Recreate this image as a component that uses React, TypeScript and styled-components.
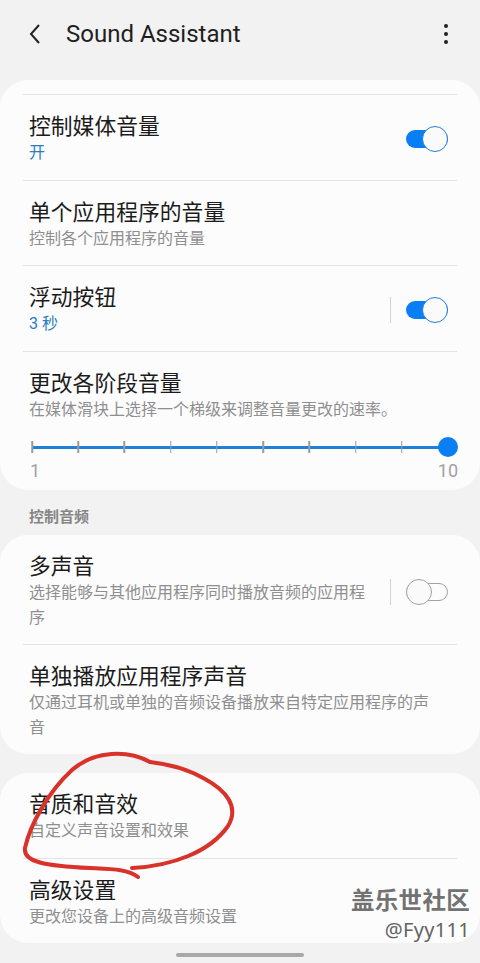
import styled, { createGlobalStyle } from "styled-components";

const GlobalStyle = createGlobalStyle`
  html, body {
    margin: 0;
    padding: 0;
    background: #f2f2f2;
  }
  body {
    font-family: Roboto, "Noto Sans CJK SC", sans-serif;
    -webkit-font-smoothing: antialiased;
  }
`;

const CJK = `Roboto, "Noto Sans CJK SC", sans-serif`;

const Page = styled.div`
  position: relative;
  width: 480px;
  height: 963px;
  overflow: hidden;
  background: #f2f2f2;
`;

const Header = styled.header`
  height: 80px;
  display: flex;
  align-items: flex-start;
  padding: 18px 24px 0 24px;
  box-sizing: border-box;
`;

const BackButton = styled.div`
  width: 30px;
  height: 32px;
  display: flex;
  align-items: center;
  justify-content: flex-start;
  padding-left: 4px;
`;

const Title = styled.h1`
  flex: 1;
  margin: 0 0 0 8px;
  font-family: Roboto, sans-serif;
  font-weight: 400;
  font-size: 24px;
  line-height: 32px;
  color: #1f1f1f;
`;

const MoreButton = styled.div`
  width: 20px;
  height: 32px;
  display: flex;
  flex-direction: column;
  align-items: center;
  justify-content: center;
  gap: 4px;
  span {
    width: 4px;
    height: 4px;
    border-radius: 50%;
    background: #222;
  }
`;

const Card = styled.section<{ $padTop?: number }>`
  background: #fcfcfc;
  border-radius: 28px;
  padding-top: ${(p) => p.$padTop ?? 0}px;
`;

const Divider = styled.div`
  height: 1px;
  background: #e4e4e4;
  margin: 0 23px;
`;

const Row = styled.div`
  display: flex;
  align-items: center;
  padding: 18px 32px 14px 29px;
`;

const RowText = styled.div`
  flex: 1;
  min-width: 0;
  padding-right: 12px;
`;

const RowTitle = styled.div`
  font-family: ${CJK};
  font-size: 21.8px;
  line-height: 28px;
  color: #1b1b1b;
`;

const RowSub = styled.div<{ $accent?: boolean }>`
  font-family: ${CJK};
  font-size: 16px;
  line-height: 24.5px;
  color: ${(p) => (p.$accent ? "#2b7bc0" : "#8f8f8f")};
`;

const VSep = styled.div`
  width: 1px;
  height: 26px;
  background: #d2d2d2;
  margin: 0 15px 0 4px;
`;

const Track = styled.div<{ $on: boolean }>`
  position: relative;
  width: 42px;
  height: 26px;
  flex-shrink: 0;
  &::before {
    content: "";
    position: absolute;
    left: 0;
    right: 0;
    top: 4px;
    height: 18px;
    border-radius: 9px;
    box-sizing: border-box;
    background: ${(p) => (p.$on ? "#0a7ff5" : "transparent")};
    border: ${(p) => (p.$on ? "none" : "1.5px solid #a3a3a3")};
  }
`;

const Thumb = styled.div<{ $on: boolean }>`
  position: absolute;
  top: 0;
  ${(p) => (p.$on ? "right: 0;" : "left: 0;")}
  width: 26px;
  height: 26px;
  border-radius: 50%;
  box-sizing: border-box;
  background: #fafafa;
  border: 1.5px solid ${(p) => (p.$on ? "#1f7fd8" : "#a3a3a3")};
`;

const Toggle = ({ on }: { on: boolean }) => (
  <Track $on={on}>
    <Thumb $on={on} />
  </Track>
);

const SliderRow = styled.div`
  padding: 18px 32px 9px 29px;
`;

const SliderBox = styled.div`
  position: relative;
  height: 20px;
  margin: 15px 0 0 3px;
`;

const SliderLine = styled.div`
  position: absolute;
  left: 0;
  right: 0;
  top: 8.5px;
  height: 3px;
  background: #1f80d8;
`;

const Tick = styled.div`
  position: absolute;
  top: 4px;
  width: 1.5px;
  height: 12px;
  background: #9a9a9a;
  transform: translateX(-0.75px);
`;

const SliderThumb = styled.div`
  position: absolute;
  right: -10px;
  top: 0;
  width: 20px;
  height: 20px;
  border-radius: 50%;
  background: #0a7ff5;
`;

const SliderLabels = styled.div`
  display: flex;
  justify-content: space-between;
  margin: 4px -10px 0 1px;
  font-family: Roboto, sans-serif;
  font-size: 18px;
  line-height: 20px;
  color: #a2a2a2;
`;

const SectionHeader = styled.div`
  font-family: ${CJK};
  font-weight: 700;
  font-size: 15px;
  line-height: 24px;
  color: #858585;
  padding: 15px 29px 6px 29px;
`;

const Gap = styled.div`
  height: 19px;
`;

const HomeBar = styled.div`
  position: absolute;
  left: 176px;
  bottom: 6px;
  width: 128px;
  height: 4px;
  border-radius: 2px;
  background: #a9a9a9;
`;

const Watermark = styled.div`
  position: absolute;
  right: 10px;
  bottom: 22px;
  display: flex;
  flex-direction: column;
  align-items: flex-end;
  gap: 7px;
  font-family: "Noto Sans CJK SC", sans-serif;
  pointer-events: none;
`;

const WatermarkName = styled.div`
  font-size: 23.5px;
  line-height: 26px;
  font-weight: 700;
  color: #727272;
  letter-spacing: 0.3px;
  text-shadow: 1px 1px 0 #ffffff;
`;

const WatermarkUser = styled.div`
  font-size: 20px;
  line-height: 22px;
  color: #636363;
  font-family: "Noto Sans", sans-serif;
  letter-spacing: 0.3px;
`;

const Scribble = styled.svg`
  position: absolute;
  left: 0;
  top: 0;
  pointer-events: none;
`;

const ticks = Array.from({ length: 10 }, (_, i) => i);

export default function App() {
  return (
    <Page>
      <GlobalStyle />
      <Header>
        <BackButton>
          <svg width="14" height="22" viewBox="0 0 14 22">
            <path d="M11 2 L3 11 L11 20" fill="none" stroke="#222" strokeWidth="2" />
          </svg>
        </BackButton>
        <Title>Sound Assistant</Title>
        <MoreButton>
          <span />
          <span />
          <span />
        </MoreButton>
      </Header>

      <Card $padTop={14}>
        <Divider />
        <Row>
          <RowText>
            <RowTitle>控制媒体音量</RowTitle>
            <RowSub $accent>开</RowSub>
          </RowText>
          <Toggle on />
        </Row>
        <Divider />
        <Row>
          <RowText>
            <RowTitle>单个应用程序的音量</RowTitle>
            <RowSub>控制各个应用程序的音量</RowSub>
          </RowText>
        </Row>
        <Divider />
        <Row>
          <RowText>
            <RowTitle>浮动按钮</RowTitle>
            <RowSub $accent>3 秒</RowSub>
          </RowText>
          <VSep />
          <Toggle on />
        </Row>
        <Divider />
        <SliderRow>
          <RowTitle>更改各阶段音量</RowTitle>
          <RowSub>在媒体滑块上选择一个梯级来调整音量更改的速率。</RowSub>
          <SliderBox>
            <SliderLine />
            {ticks.map((i) => (
              <Tick key={i} style={{ left: `${(i / 9) * 100}%` }} />
            ))}
            <SliderThumb />
          </SliderBox>
          <SliderLabels>
            <span>1</span>
            <span>10</span>
          </SliderLabels>
        </SliderRow>
      </Card>

      <SectionHeader>控制音频</SectionHeader>

      <Card>
        <Row>
          <RowText>
            <RowTitle>多声音</RowTitle>
            <RowSub>选择能够与其他应用程序同时播放音频的应用程序</RowSub>
          </RowText>
          <VSep />
          <Toggle on={false} />
        </Row>
        <Divider />
        <Row>
          <RowText>
            <RowTitle>单独播放应用程序声音</RowTitle>
            <RowSub>仅通过耳机或单独的音频设备播放来自特定应用程序的声音</RowSub>
          </RowText>
        </Row>
      </Card>

      <Gap />

      <Card>
        <Row>
          <RowText>
            <RowTitle>音质和音效</RowTitle>
            <RowSub>自定义声音设置和效果</RowSub>
          </RowText>
        </Row>
        <Divider />
        <Row>
          <RowText>
            <RowTitle>高级设置</RowTitle>
            <RowSub>更改您设备上的高级音频设置</RowSub>
          </RowText>
        </Row>
      </Card>

      <Scribble width="480" height="963" viewBox="0 0 480 963">
        <path
          d="M150 762 C128 750, 95 750, 72 770 C48 792, 30 825, 25 848 C23 862, 45 866, 90 868 C112 869, 128 869, 138 877"
          fill="none"
          stroke="#d8322b"
          strokeWidth="4"
          strokeLinecap="round"
        />
        <path
          d="M132 868 C172 866, 210 852, 228 826 C240 806, 225 790, 205 779 C188 769, 168 764, 150 762"
          fill="none"
          stroke="#d8322b"
          strokeWidth="4"
          strokeLinecap="round"
        />
      </Scribble>

      <Watermark>
        <WatermarkName>盖乐世社区</WatermarkName>
        <WatermarkUser>@Fyy111</WatermarkUser>
      </Watermark>

      <HomeBar />
    </Page>
  );
}
